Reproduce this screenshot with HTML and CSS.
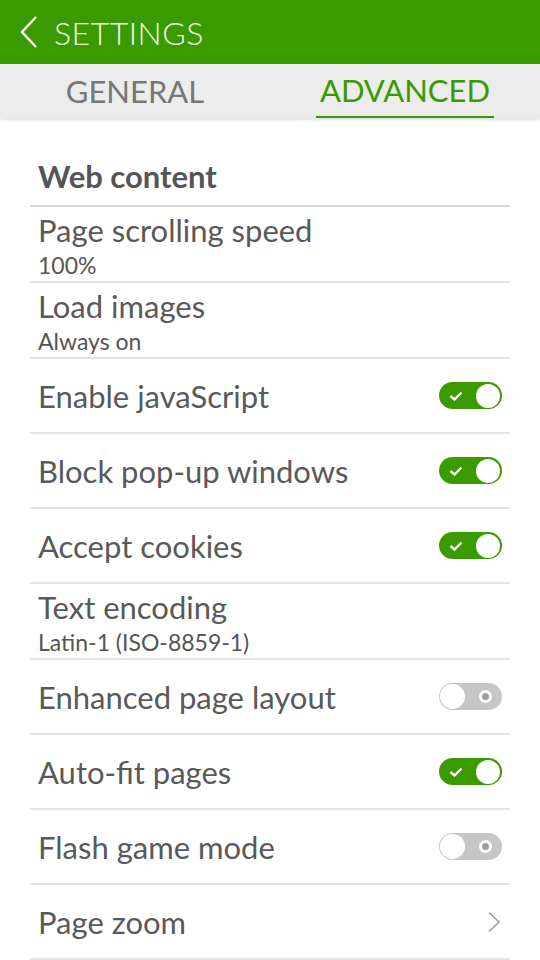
FILE: index.html
```html
<!DOCTYPE html>
<html>
<head>
<meta charset="utf-8">
<link rel="stylesheet" href="styles.css">
</head>
<body>
<header class="appbar">
  <svg class="back" width="20" height="34" viewBox="0 0 20 34"><path d="M17 2 L3 17 L17 32" fill="none" stroke="#fff" stroke-width="2.4"/></svg>
  <span class="title">SETTINGS</span>
</header>
<nav class="tabs">
  <div class="tab">GENERAL</div>
  <div class="tab active"><span>ADVANCED</span></div>
</nav>
<main class="list">
  <div class="section">Web content</div>
  <div class="row two"><div class="label">Page scrolling speed</div><div class="sub">100%</div></div>
  <div class="row two"><div class="label">Load images</div><div class="sub">Always on</div></div>
  <div class="row"><div class="label">Enable javaScript</div><span class="toggle on"><svg class="check" width="14" height="10" viewBox="0 0 14 10"><path d="M1.5 5 L5.5 8.5 L12.5 1.5" fill="none" stroke="#fff" stroke-width="2.4"/></svg><span class="knob"></span></span></div>
  <div class="row"><div class="label">Block pop-up windows</div><span class="toggle on"><svg class="check" width="14" height="10" viewBox="0 0 14 10"><path d="M1.5 5 L5.5 8.5 L12.5 1.5" fill="none" stroke="#fff" stroke-width="2.4"/></svg><span class="knob"></span></span></div>
  <div class="row"><div class="label">Accept cookies</div><span class="toggle on"><svg class="check" width="14" height="10" viewBox="0 0 14 10"><path d="M1.5 5 L5.5 8.5 L12.5 1.5" fill="none" stroke="#fff" stroke-width="2.4"/></svg><span class="knob"></span></span></div>
  <div class="row two"><div class="label">Text encoding</div><div class="sub">Latin-1 (ISO-8859-1)</div></div>
  <div class="row"><div class="label">Enhanced page layout</div><span class="toggle off"><span class="knob"></span><span class="ring"></span></span></div>
  <div class="row"><div class="label">Auto-fit pages</div><span class="toggle on"><svg class="check" width="14" height="10" viewBox="0 0 14 10"><path d="M1.5 5 L5.5 8.5 L12.5 1.5" fill="none" stroke="#fff" stroke-width="2.4"/></svg><span class="knob"></span></span></div>
  <div class="row"><div class="label">Flash game mode</div><span class="toggle off"><span class="knob"></span><span class="ring"></span></span></div>
  <div class="row"><div class="label">Page zoom</div><svg class="chev" width="14" height="22" viewBox="0 0 14 22"><path d="M2 1.5 L12 11 L2 20.5" fill="none" stroke="#9a9a9a" stroke-width="1.6"/></svg></div>
</main>
</body>
</html>
```
FILE: styles.css
```css
* { box-sizing: border-box; }
html, body { margin: 0; padding: 0; }
body {
  width: 540px;
  height: 960px;
  overflow: hidden;
  background: #fff;
  font-family: Lato, "Open Sans", sans-serif;
  color: #555;
}
.appbar {
  height: 64px;
  background: #3a9b00;
  display: flex;
  align-items: center;
  padding-left: 19px;
}
.back { margin-right: 15px; margin-top: 0; }
.title {
  color: #f2fbe8;
  font-size: 32px;
  font-weight: 300;
  letter-spacing: 0.5px;
}
.tabs {
  height: 54px;
  background: #ececec;
  display: flex;
  box-shadow: 0 2px 3px rgba(0,0,0,0.12);
  position: relative;
  z-index: 1;
}
.tab {
  flex: 1;
  display: flex;
  justify-content: center;
  align-items: center;
  font-size: 31px;
  color: #777;
  padding-top: 0;
}
.tab.active span {
  color: #3a9b00;
  height: 54px;
  display: flex;
  align-items: center;
  padding: 0 4px 0;
  border-bottom: 2px solid #3a9b00;
}
.list {
  padding: 0 30px;
}
.section {
  height: 89px;
  display: flex;
  align-items: flex-end;
  padding: 0 0 10px 8px;
  font-size: 31px;
  font-weight: bold;
  color: #555;
  border-bottom: 2px solid #d9d9d9;
}
.row {
  height: 75px;
  border-bottom: 2px solid #e4e4e4;
  display: flex;
  align-items: center;
  justify-content: space-between;
  padding: 0 8px 0 8px;
}
.row.two {
  flex-direction: column;
  align-items: flex-start;
  justify-content: flex-start;
  height: 76px;
  padding-top: 5px;
}
.label {
  font-size: 31px;
  color: #595959;
  line-height: 36px;
}
.sub {
  font-size: 23px;
  color: #555;
  line-height: 26px;
  margin-top: 4px;
}
.toggle {
  width: 63px;
  height: 27px;
  border-radius: 14px;
  display: flex;
  align-items: center;
  position: relative;
  margin-right: 0;
}
.toggle.on {
  background: #3a9b00;
  justify-content: space-between;
  padding: 0 2px 0 10px;
}
.toggle.off {
  background: #c6c6c6;
  justify-content: space-between;
  padding: 0 10px 0 1px;
}
.knob {
  width: 25px;
  height: 25px;
  border-radius: 50%;
  background: #fff;
}
.toggle.on .knob { width: 24px; height: 24px; }
.ring {
  width: 13px;
  height: 13px;
  border-radius: 50%;
  background: #9d9d9d;
  border: 3px solid #fff;
}
.chev { margin-right: 1px; }
```
